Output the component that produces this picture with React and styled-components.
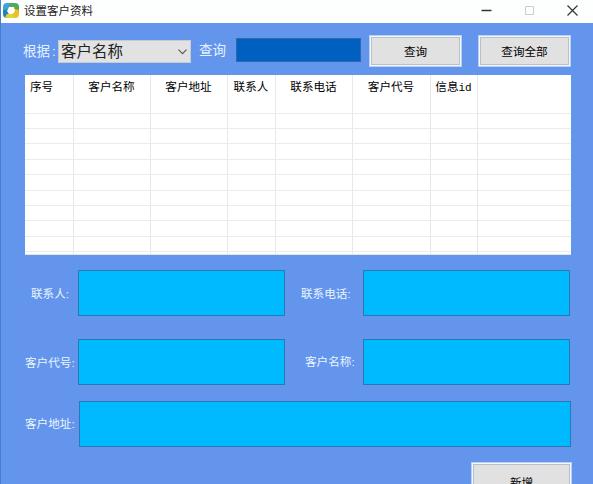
import React from "react";
import styled, { createGlobalStyle } from "styled-components";

const GlobalStyle = createGlobalStyle`
  * {
    box-sizing: border-box;
  }
  body {
    margin: 0;
    overflow: hidden;
    font-family: "Liberation Sans", "Noto Sans CJK SC", sans-serif;
  }
`;

const Window = styled.div`
  width: 593px;
  height: 484px;
  overflow: hidden;
  background-color: #6495ed;
  border-left: 1px solid #4a7fd0;
`;
const TitleBar = styled.header`
  display: flex;
  align-items: center;
  height: 23px;
  padding: 0 15px 2px 3px;
  margin-left: -1px;
  background-color: #fdfefe;
  color: #222;
  font-size: 11.5px;
`;
const Title = styled.span`
  flex: 1;
  margin-left: 5px;
  line-height: 20px;
`;
const WindowButtons = styled.div`
  display: flex;
  gap: 32px;
`;
const Toolbar = styled.div`
  display: flex;
  align-items: flex-start;
  height: 52px;
  padding: 12px 0 0 22px;
`;
const ToolLabel = styled.label`
  width: ${(props) => props.$width}px;
  margin-top: ${(props) => props.$top}px;
  color: #e4f3ff;
  font-size: 13.5px;
  line-height: 20px;
  white-space: nowrap;
`;
const Colon = styled.span`
  margin-left: 2px;
`;
const Select = styled.div`
  display: flex;
  align-items: center;
  justify-content: space-between;
  width: 133px;
  height: 23px;
  margin: 5px 8px 0 0;
  padding: 0 3px 0 2px;
  border: 1px solid #c3cbd8;
  background-color: #e2e2e2;
  color: #222;
  font-size: 15.5px;
  line-height: 20px;
`;
const SearchInput = styled.input`
  width: 125px;
  height: 24px;
  margin: 3px 8px 0 0;
  padding: 0 4px;
  border: 1px solid #2f68b0;
  background-color: #0060c0;
  color: #fff;
  outline: none;
`;
const Button = styled.button`
  width: ${(props) => props.$width || 93}px;
  height: ${(props) => props.$height || 32}px;
  margin-right: 16px;
  padding: 0;
  border: 1px solid #b7d0f4;
  box-shadow: inset 0 0 0 1px #f4f7fb, inset 0 0 0 2px #b9c0ca;
  background-color: #e1e1e1;
  color: #000;
  font-family: inherit;
  font-size: 11.6px;
`;

const Table = styled.div`
  width: 546px;
  height: 180px;
  margin-left: 24px;
  overflow: hidden;
  background-color: #fff;
  border-bottom: 1px solid #dde4ee;
`;
const Row = styled.div`
  display: grid;
  grid-template-columns: 49px 77px 77px 48px 77px 78px 47px 1fr;
  height: ${(props) => (props.$header ? 23.3 : 15.4)}px;
  border-bottom: 1px solid ${(props) => (props.$header ? "#fff" : "#ebebeb")};
`;
const Cell = styled.div`
  border-right: 1px solid #e8e8e8;
  color: #000;
  font-size: 11.6px;
  line-height: 24px;
  text-align: center;
  text-indent: -1px;
  white-space: nowrap;

  &:first-child {
    padding-left: 6px;
    text-align: left;
  }
  &:last-child {
    border-right: none;
  }
`;
const IdSuffix = styled.span`
  font-family: "Liberation Mono", monospace;
  font-size: 11px;
`;

const Form = styled.form`
  padding-top: 15px;
`;
const FormRow = styled.div`
  display: flex;
  height: ${(props) => props.$height}px;
`;
const FieldLabel = styled.label`
  width: ${(props) => props.$width}px;
  padding-left: ${(props) => props.$indent}px;
  padding-top: ${(props) => props.$top}px;
  color: #e8f5ff;
  font-size: 11.6px;
  line-height: 18px;
  white-space: nowrap;
`;
const Field = styled.input`
  width: ${(props) => props.$width || 207}px;
  height: 46px;
  padding: 0 6px;
  border: 1px solid #2878b4;
  background-color: #00baff;
  outline: none;
`;
const Actions = styled.div`
  display: flex;
  justify-content: flex-end;
  padding-right: 5px;
`;

const columns = [
  "序号",
  "客户名称",
  "客户地址",
  "联系人",
  "联系电话",
  "客户代号",
  "信息",
  "",
];

const Logo = () => (
  <svg width="16" height="17" viewBox="0 0 16 17">
    <path d="M4 1h5L6 6v5L0 9V5a4 4 0 0 1 4-4z" fill="#3fa4cf" />
    <path d="M0 8l6-1v5l-1 4H4a4 4 0 0 1-4-4z" fill="#2580b8" />
    <path d="M8 1h4a4 4 0 0 1 4 4v5l-5-2-5-3z" fill="#52ab52" />
    <path d="M11 7l5 1v4a4 4 0 0 1-4 4H9l-2-4 4-1z" fill="#eebf24" />
    <path d="M4 12l5-1 3 5H4a4 4 0 0 1-2-1z" fill="#d9d63a" />
    <path d="M6 5h5l1 4-3 3H6l-2-3z" fill="#fff" />
  </svg>
);

const App = () => (
  <Window>
    <GlobalStyle />
    <TitleBar>
      <Logo />
      <Title>设置客户资料</Title>
      <WindowButtons>
        <svg width="11" height="11" viewBox="0 0 11 11">
          <path d="M0.5 5.5h10" stroke="#333" strokeWidth="1.5" />
        </svg>
        <svg width="11" height="11" viewBox="0 0 11 11">
          <path d="M1.5 1.5h8v8h-8z" fill="none" stroke="#ccc" />
        </svg>
        <svg width="11" height="11" viewBox="0 0 11 11">
          <path d="M0.5 0.5l10 10M10.5 0.5l-10 10" stroke="#333" strokeWidth="1.2" />
        </svg>
      </WindowButtons>
    </TitleBar>
    <Toolbar>
      <ToolLabel $width={35} $top={7}>
        根据<Colon>:</Colon>
      </ToolLabel>
      <Select>
        客户名称
        <svg width="9" height="6" viewBox="0 0 9 6">
          <path d="M0.5 0.7l4 4 4-4" fill="none" stroke="#555" strokeWidth="1.1" />
        </svg>
      </Select>
      <ToolLabel $width={37} $top={6}>
        查询
      </ToolLabel>
      <SearchInput />
      <Button>查询</Button>
      <Button>查询全部</Button>
    </Toolbar>
    <Table>
      <Row $header>
        {columns.map((column, index) => (
          <Cell key={index}>
            {column}
            {column === "信息" && <IdSuffix>id</IdSuffix>}
          </Cell>
        ))}
      </Row>
      {Array.from({ length: 11 }).map((_, row) => (
        <Row key={row}>
          {columns.map((_, index) => (
            <Cell key={index} />
          ))}
        </Row>
      ))}
    </Table>
    <Form>
      <FormRow $height={69}>
        <FieldLabel $width={77} $indent={30} $top={15}>
          联系人:
        </FieldLabel>
        <Field />
        <FieldLabel $width={78} $indent={16} $top={15}>
          联系电话:
        </FieldLabel>
        <Field />
      </FormRow>
      <FormRow $height={62}>
        <FieldLabel $width={77} $indent={24} $top={15}>
          客户代号:
        </FieldLabel>
        <Field />
        <FieldLabel $width={78} $indent={20} $top={14}>
          客户名称:
        </FieldLabel>
        <Field />
      </FormRow>
      <FormRow $height={61}>
        <FieldLabel $width={78} $indent={24} $top={14}>
          客户地址:
        </FieldLabel>
        <Field $width={492} />
      </FormRow>
      <Actions>
        <Button type="button" $width={101} $height={40}>
          新增
        </Button>
      </Actions>
    </Form>
  </Window>
);

export default App;
